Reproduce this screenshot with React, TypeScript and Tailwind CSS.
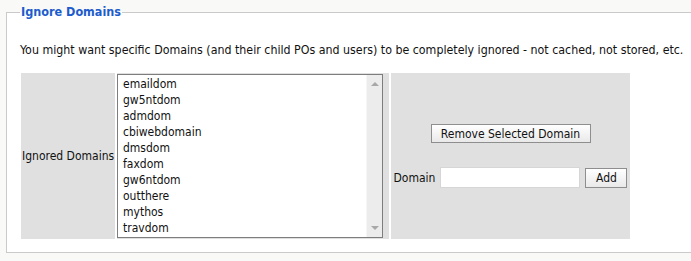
const domains = [
  "emaildom",
  "gw5ntdom",
  "admdom",
  "cbiwebdomain",
  "dmsdom",
  "faxdom",
  "gw6ntdom",
  "outthere",
  "mythos",
  "travdom",
];

const font = "font-['DejaVu_Sans_Condensed','DejaVu_Sans',sans-serif]";

function ListBox() {
  return (
    <div className="flex h-[164px] w-[266px] border border-[#7d7d7d] bg-white">
      <div className="flex-1 overflow-hidden pl-[5px] pt-[1px]">
        {domains.map((d) => (
          <div key={d} className="h-[16px] text-[12px] leading-[16px] text-[#111]">
            {d}
          </div>
        ))}
      </div>
      {/* scrollbar, disabled look */}
      <div className="flex w-[16px] flex-col items-center justify-between border-l border-[#f6f6f6] bg-[#ececec] py-[7px]">
        <span className="h-0 w-0 border-x-[4px] border-b-[4px] border-x-transparent border-b-[#a8a8a8]" />
        <span className="h-0 w-0 border-x-[4px] border-t-[4px] border-x-transparent border-t-[#a8a8a8]" />
      </div>
    </div>
  );
}

function Btn({ children, className = "" }: { children: React.ReactNode; className?: string }) {
  return (
    <button
      className={`border border-[#8e8e8e] bg-gradient-to-b from-white to-[#e9e9e9] text-[12px] leading-none text-[#111] ${className}`}
    >
      {children}
    </button>
  );
}

export default function App() {
  return (
    <div className={`h-[261px] w-[691px] overflow-hidden bg-[#f9f9f7] pl-[6px] pt-[5px] ${font}`}>
      <fieldset className="w-[700px] border border-[#cacaca] bg-white pb-[13px] pl-[14px]">
        <legend className="-ml-[1px] px-[1px] text-[12.5px] font-bold leading-[14px] text-[#1d5ccd]">
          Ignore Domains
        </legend>
        <p className="-ml-[1px] mt-[23px] whitespace-nowrap text-[12.3px] leading-[16px] text-[#111]">
          You might want specific Domains (and their child POs and users) to be completely ignored - not cached, not stored, etc.
        </p>
        <div className="mt-[15px] flex h-[166px] gap-[2px] text-[12px] text-[#111]">
          <div className="flex w-[94px] items-center bg-[#e0e0e0] pl-[1px]">Ignored Domains</div>
          <div className="flex w-[272px] items-center bg-[#e0e0e0]">
            <ListBox />
          </div>
          <div className="flex w-[239px] flex-col items-center justify-center gap-[24px] bg-[#e0e0e0]">
            <Btn className="h-[19px] w-[160px]">Remove Selected Domain</Btn>
            <div className="flex items-center">
              <span>Domain</span>
              <input className="ml-[5px] h-[21px] w-[140px] border border-[#d6d6d6] bg-white outline-none" />
              <Btn className="ml-[5px] h-[20px] w-[42px]">Add</Btn>
            </div>
          </div>
        </div>
      </fieldset>
    </div>
  );
}
